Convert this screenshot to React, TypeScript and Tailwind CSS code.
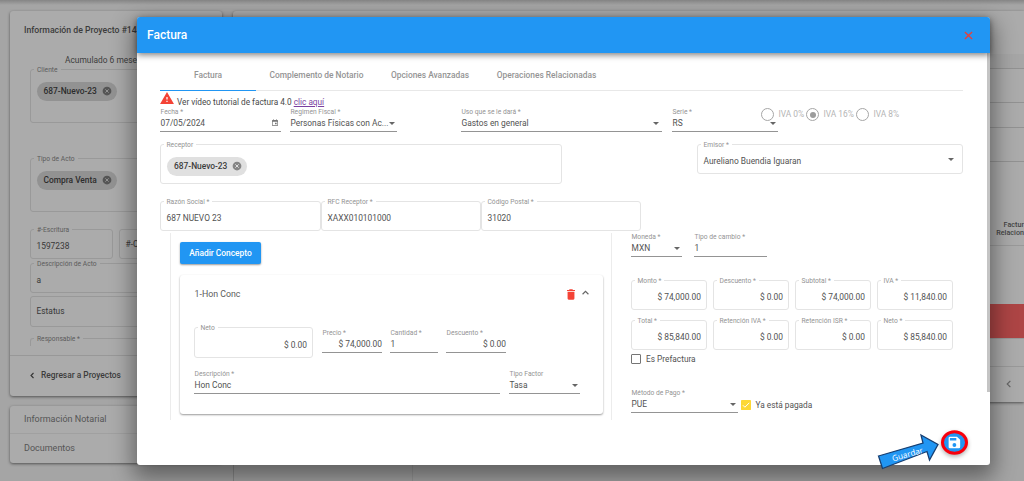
import React from "react";
import clsx from "clsx";

type FieldProps = {
  label: string;
  value?: string;
  className?: string;
  right?: boolean;
  icon?: React.ReactNode;
};

const Caret = ({ className }: { className?: string }) => (
  <svg viewBox="0 0 10 5" className={clsx("w-[6px] h-[3px] shrink-0", className)}>
    <path d="M0 0h10L5 5z" fill="#666" />
  </svg>
);

const CalendarIcon = () => (
  <svg viewBox="0 0 24 24" className="w-[8px] h-[8px] mr-[2px] shrink-0">
    <path
      fill="#757575"
      d="M19 3h-1V1h-2v2H8V1H6v2H5a2 2 0 0 0-2 2v14c0 1.100.9 2 2 2h14a2 2 0 0 0 2-2V5a2 2 0 0 0-2-2zm0 16H5V8h14v11zm-7-8h5v5h-5z"
    />
  </svg>
);

const LineField = ({ label, value, className, right, icon }: FieldProps) => (
  <div className={clsx("h-[25px] shrink-0 border-b border-[#949494]", className)}>
    <div className="h-[9px] pl-[0.5px] pt-[0.5px] leading-[9px] text-[6.7px] text-[#949494] whitespace-nowrap">
      {label}
    </div>
    <div className="h-[14px] pl-[0.5px] flex items-center justify-between text-[8.4px] text-[#525252] whitespace-nowrap">
      <span className={clsx(right && "w-full text-right")}>{value}</span>
      {icon}
    </div>
  </div>
);

const OutlinedField = ({ label, value, className, right, icon }: FieldProps) => (
  <fieldset
    className={clsx(
      "relative h-[30px] shrink-0 rounded-[3px] border border-[#e4e4e4] pl-[5.5px] pr-[5px] pt-[5px] flex items-center text-[8.4px] text-[#525252]",
      right ? "justify-end" : "justify-between",
      className
    )}
  >
    <span className="absolute left-[2.5px] top-[-4.5px] bg-white px-[3px] text-[6.7px] leading-[9px] text-[#949494] whitespace-nowrap">
      {label}
    </span>
    <span>{value}</span>
    {icon}
  </fieldset>
);

const Chip = ({ text, dark }: { text: string; dark?: boolean }) => (
  <div
    className={clsx(
      "flex w-fit items-center gap-[5px] rounded-full h-[19px] pl-[7px] pr-[5px] text-[8.4px] font-medium whitespace-nowrap",
      dark ? "bg-[#929292] text-[#2c2c2c]" : "bg-[#e0e0e0] text-[#3c3c3c]"
    )}
  >
    {text}
    <svg viewBox="0 0 24 24" className="w-[10px] h-[10px]">
      <circle cx="12" cy="12" r="10.500" fill={dark ? "#555" : "#858585"} />
      <path d="M8 8l8 8M16 8l-8 8" stroke={dark ? "#929292" : "#e0e0e0"} strokeWidth="2.400" />
    </svg>
  </div>
);

const Radio = ({ label, checked, className }: { label: string; checked?: boolean; className?: string }) => (
  <label className={clsx("flex items-center text-[8.4px] text-[#b4b4b4] whitespace-nowrap", className)}>
    <span className="mr-[4.5px] flex w-[13px] h-[13px] items-center justify-center rounded-full border-[1.5px] border-[#a6a6a6]">
      {checked && <span className="w-[6px] h-[6px] rounded-full bg-[#9c9c9c]" />}
    </span>
    {label}
  </label>
);

const BackField = ({ label, value, className, children }: FieldProps & { children?: React.ReactNode }) => (
  <div
    className={clsx(
      "relative shrink-0 rounded-[3px] border border-[#999] pl-[5.5px] flex items-center text-[8.4px] text-[#383838]",
      className
    )}
  >
    {label && (
      <span className="absolute left-[3px] top-[-4px] bg-[#ababab] px-[3px] text-[6.7px] leading-[9px] text-[#5c5c5c] whitespace-nowrap">
        {label}
      </span>
    )}
    {children ?? <span>{value}</span>}
  </div>
);

const ProjectPanel = () => (
  <aside className="w-[212px] ml-[10px] shrink-0 text-[#3c3c3c]">
    <section className="h-[385px] mt-[11px] rounded-[3px] bg-[#ababab] shadow-[0_1px_3px_rgba(0,0,0,0.5)]">
      <h2 className="pt-[13px] pl-[14px] text-[8.7px] leading-[13px] font-medium whitespace-nowrap">
        Información de Proyecto #14
      </h2>
      <p className="mt-[17px] pl-[55px] text-[8.4px] leading-[13px] whitespace-nowrap">Acumulado 6 meses</p>
      <div className="px-[20px]">
        <BackField label="Cliente" className="mt-[2px] h-[54px] pb-[10px]">
          <Chip text="687-Nuevo-23" dark />
        </BackField>
        <BackField label="Tipo de Acto" className="mt-[35px] h-[54px] pb-[10px]">
          <Chip text="Compra Venta" dark />
        </BackField>
        <div className="mt-[17px] flex gap-[6px]">
          <BackField label="#-Escritura" value="1597238" className="w-[83px] h-[30px] pt-[4px]" />
          <BackField label="" value="#-Control" className="w-[83px] h-[30px] text-[#555]" />
        </div>
        <BackField label="Descripción de Acto" value="a" className="mt-[4px] h-[30px] pt-[4px]" />
        <BackField label="" value="Estatus" className="mt-[3px] h-[31px] text-[#555]" />
        <BackField label="Responsable *" value="" className="mt-[11px] h-[8px] border-b-0 rounded-b-none" />
      </div>
      <div className="mt-[9px] h-[40px] border-t border-[#989898] flex items-center pl-[20px] text-[8.4px] font-medium">
        <svg viewBox="0 0 8 12" className="w-[4px] h-[7px] mr-[7px]" fill="none" stroke="#333" strokeWidth="2.200">
          <path d="M7 1L2 6l5 5" />
        </svg>
        Regresar a Proyectos
      </div>
    </section>
    <section className="mt-[10px] h-[57px] rounded-[3px] bg-[#ababab] text-[9px] text-[#555] shadow-[0_1px_3px_rgba(0,0,0,0.5)]">
      <div className="h-[28px] pl-[14px] pt-[1px] flex items-center border-b border-[#a0a0a0]">
        Información Notarial
      </div>
      <div className="h-[29px] pl-[14px] flex items-center">Documentos</div>
    </section>
  </aside>
);

const ListPanel = () => (
  <div className="ml-[11px] flex-1">
    <section className="mt-[11px] h-[391px] rounded-l-[3px] bg-[#ababab] shadow-[0_1px_3px_rgba(0,0,0,0.5)]">
      <div className="h-[43px]" />
      <div className="h-[15px] border-b border-[#929292] bg-[#a6a6a6]" />
      <div className="h-[34px] border-b border-[#929292]" />
      <div className="h-[25px] border-b border-[#929292]" />
      <div className="h-[34px] border-b border-[#929292]" />
      <div className="h-[84px] border-b border-[#999] pb-[8px] flex items-end justify-end text-right text-[7.2px] leading-[8px] font-medium text-[#444]">
        <div>
          Factur
          <br />
          Relacion
        </div>
      </div>
      <div className="h-[58px]" />
      <div className="h-[35px] bg-[#ad4545] border-b border-[#999]" />
      <div className="h-[28px] border-b border-[#999]" />
      <div className="h-[34px] flex items-center justify-end pr-[13px]">
        <svg viewBox="0 0 8 12" className="w-[5px] h-[8px]" fill="none" stroke="#666" strokeWidth="2">
          <path d="M7 1L2 6l5 5" />
        </svg>
      </div>
    </section>
    <div className="mt-[10px] h-[69px] w-[180px] border-l border-r border-l-[#8c8c8c] border-r-[#999]" />
  </div>
);

const ConceptCard = () => (
  <div className="mt-[11px] w-[423px] h-[139px] rounded-[3px] pl-[14px] bg-white shadow-[0_1px_2px_rgba(0,0,0,0.4)]">
    <div className="flex h-[38px] items-center text-[8.8px] text-[#5c5c5c]">
      <span className="w-[373px] pt-[1px] pl-[0.5px]">1-Hon Conc</span>
      <svg viewBox="0 0 14 18" className="w-[8px] h-[11px]">
        <path d="M1 16a2 2 0 0 0 2 2h8a2 2 0 0 0 2-2V4H1zM14 1h-3.500l-1-1h-5l-1 1H0v2h14z" fill="#f44336" />
      </svg>
      <svg viewBox="0 0 12 8" className="ml-[7px] mb-[4px] w-[7px] h-[5px]" fill="none" stroke="#666" strokeWidth="2">
        <path d="M1 7l5-5 5 5" />
      </svg>
    </div>
    <div className="mt-[14px] flex">
      <OutlinedField label="Neto" value="$ 0.00" right className="w-[119px] h-[31px]" />
      <LineField label="Precio *" value="$ 74,000.00" right className="ml-[9px] mt-[1px] w-[60px]" />
      <LineField label="Cantidad *" value="1" className="ml-[8px] mt-[1px] w-[48px]" />
      <LineField label="Descuento *" value="$ 0.00" right className="ml-[8px] mt-[1px] w-[60px]" />
    </div>
    <div className="mt-[11px] flex gap-[9px]">
      <LineField label="Descripción *" value="Hon Conc" className="w-[306px]" />
      <LineField label="Tipo Factor" value="Tasa" icon={<Caret className="mr-[2px]" />} className="w-[71px]" />
    </div>
  </div>
);

const totals = [
  { label: "Monto *", value: "$ 74,000.00" },
  { label: "Descuento *", value: "$ 0.00" },
  { label: "Subtotal *", value: "$ 74,000.00" },
  { label: "IVA *", value: "$ 11,840.00" },
  { label: "Total *", value: "$ 85,840.00" },
  { label: "Retención IVA *", value: "$ 0.00" },
  { label: "Retención ISR *", value: "$ 0.00" },
  { label: "Neto *", value: "$ 85,840.00" },
];

const Totals = () => (
  <div className="ml-[19px] w-[322px] text-[8.3px] text-[#525252]">
    <div className="mt-[1px] flex gap-[12px]">
      <LineField label="Moneda *" value="MXN" icon={<Caret className="mr-[2px]" />} className="w-[51px]" />
      <LineField label="Tipo de cambio *" value="1" className="w-[73px]" />
    </div>
    <div className="mt-[23px] grid grid-cols-4 gap-x-[6px] gap-y-[10px]">
      {totals.map((t) => (
        <OutlinedField key={t.label} label={t.label} value={t.value} right />
      ))}
    </div>
    <div className="mt-[4px] flex h-[10px] items-center gap-[5px]">
      <span className="w-[10px] h-[10px] rounded-[1px] border-[1.5px] border-[#757575]" />
      Es Prefactura
    </div>
    <div className="mt-[24px] flex">
      <LineField label="Método de Pago *" value="PUE" icon={<Caret className="mr-[2px]" />} className="w-[107px]" />
      <div className="ml-[3px] mt-[12px] flex h-[10px] items-center gap-[4.500px]">
        <svg viewBox="0 0 18 18" className="w-[10px] h-[10px]">
          <rect width="18" height="18" rx="1.500" fill="#fdd835" />
          <path d="M3.500 9.500l3.500 3.500 8-8" fill="none" stroke="#fff" strokeWidth="1.800" />
        </svg>
        Ya está pagada
      </div>
    </div>
  </div>
);

const InvoiceDialog = () => (
  <div className="absolute left-[137px] top-[17px] w-[853px] h-[448px] rounded-[3px] bg-white shadow-[0_9px_22px_4px_rgba(0,0,0,0.42)] flex flex-col">
    <header className="relative z-10 h-[36px] shrink-0 flex items-center justify-between rounded-t-[3px] bg-[#2196f3] pl-[10px] pr-[17px] shadow-[0_2px_6px_rgba(0,0,0,0.5)]">
      <h1 className="text-[12px] font-medium text-white">Factura</h1>
      <svg viewBox="0 0 10 10" className="w-[9px] h-[9px]" stroke="#e8403a" strokeWidth="1.500">
        <path d="M1 1l8 8M9 1L1 9" />
      </svg>
    </header>
    <div className="flex flex-1">
      <div className="w-[827px] pl-[23px]">
        <nav className="mt-[7px] w-[803px] h-[31px] flex border-b border-[#e8e8e8] text-[8.4px] font-medium text-[#949494]">
          <div className="h-[31px] w-[96px] pt-[1px] flex items-center justify-center border-b border-[#2196f3]">
            Factura
          </div>
          <div className="w-[121px] pt-[1px] flex items-center justify-center">Complemento de Notario</div>
          <div className="w-[106px] pt-[1px] flex items-center justify-center">Opciones Avanzadas</div>
          <div className="w-[127px] pt-[1px] flex items-center justify-center">Operaciones Relacionadas</div>
        </nav>
        <div className="flex h-[16px] items-end text-[8.25px] leading-[10px] text-[#484848]">
          <svg viewBox="0 0 22 19" className="mr-[3px] mb-[3px] w-[14px] h-[12px]">
            <path d="M0 19h22L11 0zM12 16h-2v-2h2zm0-4h-2V8h2z" fill="#f44336" />
          </svg>
          <span>
            Ver vídeo tutorial de factura 4.0 <a className="text-[#7b3fa0] underline">clic aquí</a>
          </span>
        </div>
        <div className="flex">
          <LineField label="Fecha *" value="07/05/2024" icon={<CalendarIcon />} className="w-[121px]" />
          <LineField
            label="Regimen Fiscal *"
            value="Personas Físicas con Ac..."
            icon={<Caret className="mr-[2px]" />}
            className="ml-[9px] w-[107px]"
          />
          <LineField
            label="Uso que se le dará *"
            value="Gastos en general"
            icon={<Caret className="mr-[3px]" />}
            className="ml-[64px] w-[201px]"
          />
          <LineField
            label="Serie *"
            value="RS"
            icon={<Caret className="mr-[2px]" />}
            className="ml-[10px] w-[106px]"
          />
          <div className="-ml-[17px] flex h-[15px]">
            <Radio label="IVA 0%" className="w-[45px]" />
            <Radio label="IVA 16%" checked className="w-[50px]" />
            <Radio label="IVA 8%" />
          </div>
        </div>
        <div className="mt-[12px] flex items-start justify-between w-[803px]">
          <OutlinedField
            label="Receptor"
            className="w-[402px] h-[40px]"
            icon={
              <div className="absolute left-[6px] top-[11.500px]">
                <Chip text="687-Nuevo-23" />
              </div>
            }
          />
          <OutlinedField
            label="Emisor *"
            value="Aureliano Buendia Iguaran"
            icon={<Caret className="mr-[3px] mb-[4px]" />}
            className="w-[266px]"
          />
        </div>
        <div className="mt-[17px] flex">
          <OutlinedField label="Razón Social *" value="687 NUEVO 23" className="w-[161px]" />
          <OutlinedField label="RFC Receptor *" value="XAXX010101000" className="w-[160px]" />
          <OutlinedField label="Código Postal *" value="31020" className="w-[160px]" />
        </div>
        <div className="flex">
          <div className="ml-[10px] mt-[2px] w-[442px] h-[187px] border-x border-[#ececec] pl-[9px] pt-[9px]">
            <button className="block w-[81px] h-[22px] rounded-[2px] bg-[#2196f3] text-[8.4px] font-medium text-white shadow-[0_1px_2px_rgba(0,0,0,0.4)]">
              Añadir Concepto
            </button>
            <ConceptCard />
          </div>
          <Totals />
        </div>
      </div>
      <div className="ml-auto w-[3px] h-[339px] bg-[#c4c4c4]" />
    </div>
  </div>
);

const SaveCallout = () => (
  <svg viewBox="0 0 100 54" className="absolute left-[872px] top-[426px] w-[100px] h-[54px]">
    <ellipse
      cx="82.500"
      cy="16.500"
      rx="12"
      ry="10.800"
      fill="#2196f3"
      stroke="#f8000c"
      strokeWidth="3"
      className="drop-shadow-[0_2px_2px_rgba(0,0,0,0.3)]"
    />
    <path
      transform="translate(76 10) scale(0.640)"
      fill="#fff"
      d="M14 1H3a2 2 0 0 0-2 2v14a2 2 0 0 0 2 2h14a2 2 0 0 0 2-2V6zM10 17a3 3 0 1 1 0-6 3 3 0 0 1 0 6zm3-10H3V3h10z"
    />
    <path d="M6.500 30L51 17l-2-8 17 9.500L57.500 34l-2.500-8.500L10.500 42.500z" fill="#2196f3" stroke="#173f72" strokeWidth="1.300" />
    <text x="21" y="35.500" transform="rotate(-16 21 35.500)" fontSize="8.200" fill="#fff" fontFamily="Open Sans, sans-serif">
      Guardar
    </text>
  </svg>
);

export default function App() {
  return (
    <main className="relative flex w-[1024px] h-[481px] overflow-hidden bg-[#a5a5a5] font-['Roboto',sans-serif]">
      <ProjectPanel />
      <ListPanel />
      <div className="absolute inset-x-0 top-0 h-[5px] bg-gradient-to-b from-[#858585] to-transparent" />
      <InvoiceDialog />
      <SaveCallout />
    </main>
  );
}
